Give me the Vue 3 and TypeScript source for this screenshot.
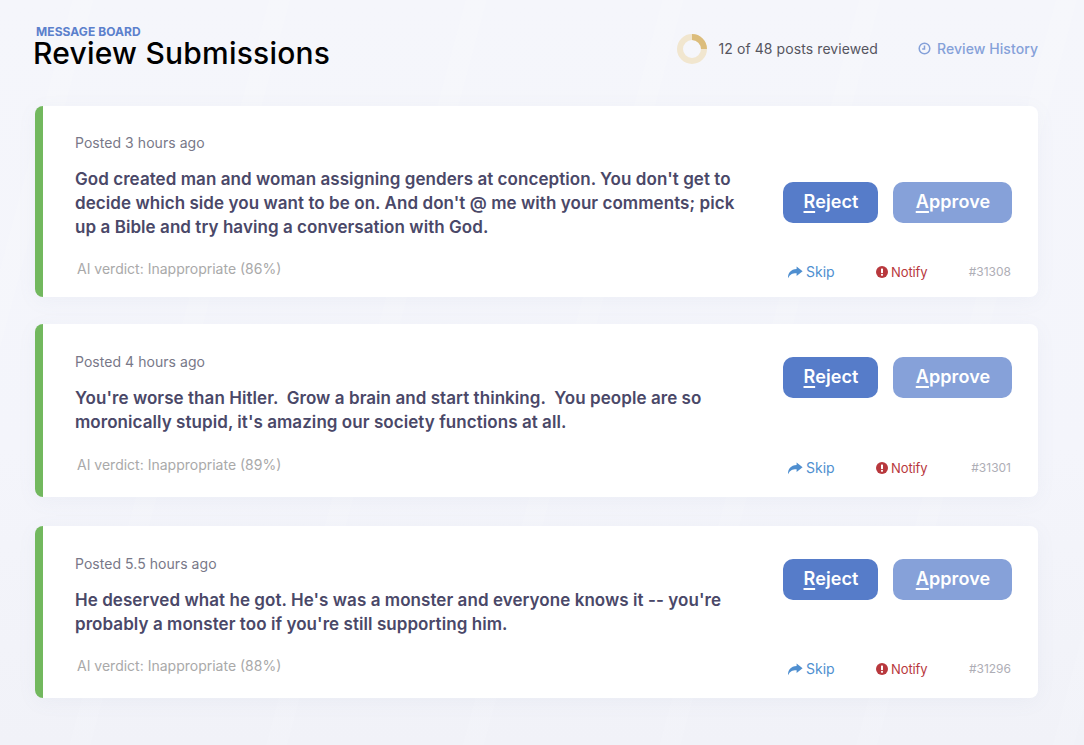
<script setup lang="ts">
interface Post {
  id: string
  age: string
  text: string
  verdict: number
  kind: 'first' | 'second' | 'third'
}
const posts: Post[] = [
  { id: '#31308', age: '3 hours', text: "God created man and woman assigning genders at conception. You don't get to decide which side you want to be on. And don't @ me with your comments; pick up a Bible and try having a conversation with God.", verdict: 86, kind: 'first' },
  { id: '#31301', age: '4 hours', text: "You're worse than Hitler.  Grow a brain and start thinking.  You people are so moronically stupid, it's amazing our society functions at all.", verdict: 89, kind: 'second' },
  { id: '#31296', age: '5.5 hours', text: "He deserved what he got. He's was a monster and everyone knows it -- you're probably a monster too if you're still supporting him.", verdict: 88, kind: 'third' },
]
</script>

<template>
  <div class="page">
    <header class="top">
      <div class="heading">
        <div class="eyebrow">MESSAGE BOARD</div>
        <h1 class="title">Review Submissions</h1>
      </div>
      <div class="progress">
        <svg class="donut" width="30" height="30" viewBox="0 0 30 30">
          <circle cx="15" cy="15" r="12" fill="none" stroke="#f1e6cf" stroke-width="6" />
          <path d="M15 3 A12 12 0 0 1 27 15" fill="none" stroke="#dcbd7c" stroke-width="6" />
        </svg>
        <span>12 of 48 posts reviewed</span>
      </div>
      <a class="history">
        <svg width="13" height="13" viewBox="0 0 13 13" fill="none" stroke="currentColor" stroke-width="1.5">
          <circle cx="6.5" cy="6.5" r="5.3" />
          <path d="M6.5 3.6V7H4.2" />
        </svg>
        Review History
      </a>
    </header>

    <section v-for="post in posts" :key="post.id" class="card" :class="post.kind">
      <div class="main">
        <div class="posted">Posted {{ post.age }} ago</div>
        <p class="body">{{ post.text }}</p>
        <div class="verdict">AI verdict: Inappropriate ({{ post.verdict }}%)</div>
      </div>
      <div class="side">
        <div class="buttons">
          <button class="btn reject"><u>R</u>eject</button>
          <button class="btn approve"><u>A</u>pprove</button>
        </div>
        <div class="links">
          <a class="skip">
            <svg width="16" height="13" viewBox="0 0 16 13" fill="currentColor">
              <path d="M9.6 0.4 15.6 5.2 9.6 10V7.2C5.6 7.1 3 8.2 1 12.2 0.9 7 3.8 3.4 9.6 3.1Z" />
            </svg>
            Skip
          </a>
          <a class="notify">
            <svg width="12" height="12" viewBox="0 0 12 12">
              <circle cx="6" cy="6" r="6" fill="currentColor" />
              <rect x="5" y="2.4" width="2" height="4.6" rx="0.6" fill="#fff" />
              <circle cx="6" cy="8.8" r="1.1" fill="#fff" />
            </svg>
            Notify
          </a>
          <span class="id">{{ post.id }}</span>
        </div>
      </div>
    </section>
  </div>
</template>

<style>
html, body {
  margin: 0;
  background: #f4f5fb;
}
</style>

<style scoped>
.page {
  box-sizing: border-box;
  width: 1084px;
  height: 745px;
  padding: 23px 46px 0 35px;
  overflow: hidden;
  font-family: Inter, "Liberation Sans", sans-serif;
  background-color: #f4f5fb;
  background-image:
    repeating-linear-gradient(105deg, rgba(255,255,255,0) 0 70px, rgba(255,255,255,0.1) 70px 90px, rgba(255,255,255,0) 90px 190px),
    linear-gradient(180deg, #f5f6fb 0%, #f4f5fb 60%, #f1f2f8 100%);
}
.top {
  display: flex;
  align-items: center;
  height: 47px;
  margin-bottom: 36px;
}
.heading {
  flex: 1;
}
.eyebrow {
  margin-left: 1px;
  font-size: 12px;
  line-height: 13px;
  font-weight: 700;
  letter-spacing: 0.08px;
  color: #5b80cc;
}
.title {
  margin: 0 0 0 -2px;
  font-size: 30px;
  line-height: 30px;
  font-weight: 500;
  letter-spacing: 0.22px;
  color: #000;
}
.progress {
  display: flex;
  align-items: center;
  gap: 11px;
  margin: 4px 40px 0 0;
  font-size: 14px;
  letter-spacing: 0.09px;
  color: #55555f;
}
.history {
  display: flex;
  align-items: center;
  gap: 6px;
  margin-top: 4px;
  font-size: 14px;
  font-weight: 500;
  letter-spacing: 0.07px;
  color: #85a1d9;
}
.card {
  display: flex;
  box-sizing: border-box;
  justify-content: space-between;
  padding: 28px 26px 19px 32px;
  background: #fff;
  border-left: 8px solid #72b85e;
  border-radius: 8px;
  box-shadow: 0 4px 20px rgba(120, 130, 170, 0.06);
}
.card.first {
  margin-bottom: 27px;
  padding-top: 27px;
  padding-bottom: 15px;
}
.card.second {
  margin-bottom: 29px;
}
.main {
  width: 665px;
  padding-bottom: 3px;
}
.posted {
  font-size: 14px;
  line-height: 20px;
  letter-spacing: 0.05px;
  color: #787888;
}
.body {
  margin: 14px 0 0;
  font-size: 17px;
  line-height: 24px;
  font-weight: 600;
  letter-spacing: 0.06px;
  color: #4a4868;
  white-space: pre-wrap;
}
.verdict {
  margin: 20px 0 0 2px;
  font-size: 14px;
  line-height: 20px;
  color: #a9a9a9;
}
.second .verdict {
  margin-top: 21px;
}
.side {
  display: flex;
  flex-direction: column;
  justify-content: space-between;
  width: 229px;
}
.buttons {
  display: flex;
  justify-content: space-between;
  margin-top: 5px;
}
.first .buttons {
  margin-top: 49px;
}
.btn {
  height: 41px;
  padding: 0 0 2px 1px;
  border: 0;
  border-radius: 10px;
  font-family: inherit;
  font-size: 18px;
  font-weight: 600;
  letter-spacing: 0.1px;
  color: #fff;
}
.btn u {
  text-decoration-thickness: 1.5px;
  text-underline-offset: 3px;
}
.reject {
  width: 95px;
  background: #567cc9;
}
.approve {
  width: 119px;
  background: #86a1d9;
}
.links {
  display: flex;
  align-items: center;
  font-size: 14px;
  line-height: 20px;
}
.skip, .notify {
  display: flex;
  align-items: center;
}
.skip {
  gap: 3px;
  width: 89px;
  margin-left: 4px;
  color: #4f8fd0;
}
.notify {
  gap: 3px;
  font-size: 13px;
  letter-spacing: -0.1px;
  color: #b8383d;
}
.id {
  margin: 0 1px 0 auto;
  font-size: 12px;
  color: #aeaeb6;
}
</style>
